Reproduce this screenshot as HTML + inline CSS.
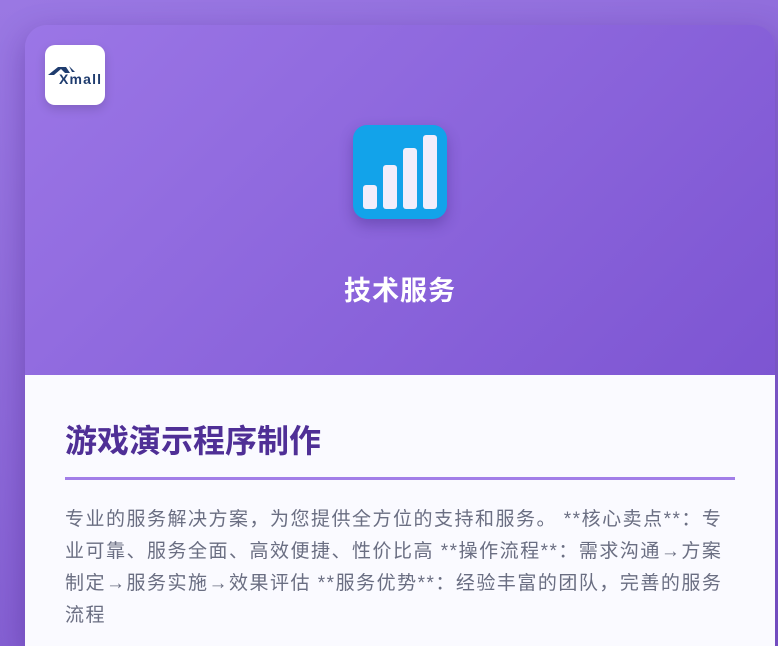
<!DOCTYPE html>
<html><head><meta charset="utf-8"><style>
html,body{margin:0;width:778px;height:646px;overflow:hidden;}
body{background:linear-gradient(160deg,#9a78e3,#7c56cc);font-family:"Liberation Sans","Noto Sans CJK SC",sans-serif;position:relative;}
.card{position:absolute;left:25px;top:25px;width:750px;height:621px;border-radius:22px 22px 0 0;overflow:hidden;box-shadow:0 10px 30px rgba(60,20,120,.35);}
.head{height:350px;background:linear-gradient(135deg,#9b76e6,#7d55d2);position:relative;}
.logo{position:absolute;left:20px;top:20px;width:60px;height:60px;background:#fff;border-radius:10px;box-shadow:0 4px 10px rgba(0,0,0,.15);}
.icon{position:absolute;left:328px;top:100px;width:94px;height:94px;background:#12a3ea;border-radius:14px;box-shadow:0 6px 14px rgba(40,20,100,.3);}
.bar{position:absolute;bottom:10px;width:14px;background:#f1eefb;border-radius:3px;}
.t{position:absolute;top:244px;width:100%;text-align:center;color:#fff;font-size:27px;font-weight:bold;letter-spacing:1px;}
.body{background:#fafaff;height:271px;padding:0 40px;overflow:hidden;}
h1{margin:0;padding-top:46px;font-size:32px;color:#4f2f96;font-weight:bold;line-height:40px;padding-bottom:16px;border-bottom:3px solid #a27ee8;}
p{margin:24px 0 0;font-size:19px;line-height:32px;color:#6a6e82;letter-spacing:1.5px;}
</style></head><body>
<div class="card">
<div class="head">
<div class="logo"><svg width="60" height="60" viewBox="0 0 60 60"><path d="M3 30 L13 22 L21 22 L25 28 L20 28 L16 24 L9 30Z" fill="#1f3c6e"/><path d="M24 21 L30 27 L27 27Z" fill="#1f3c6e"/><text x="14" y="39" font-family="Liberation Sans" font-weight="bold" font-size="14" fill="#1f3c6e" textLength="42">Xmall</text></svg></div>
<div class="icon">
<div class="bar" style="left:10px;height:24px"></div>
<div class="bar" style="left:30px;height:44px"></div>
<div class="bar" style="left:50px;height:61px"></div>
<div class="bar" style="left:70px;height:74px"></div>
</div>
<div class="t">技术服务</div>
</div>
<div class="body">
<h1>游戏演示程序制作</h1>
<p>专业的服务解决方案，为您提供全方位的支持和服务。 **核心卖点**：专业可靠、服务全面、高效便捷、性价比高 **操作流程**：需求沟通→方案制定→服务实施→效果评估 **服务优势**：经验丰富的团队，完善的服务流程</p>
</div>
</div>
</body></html>
